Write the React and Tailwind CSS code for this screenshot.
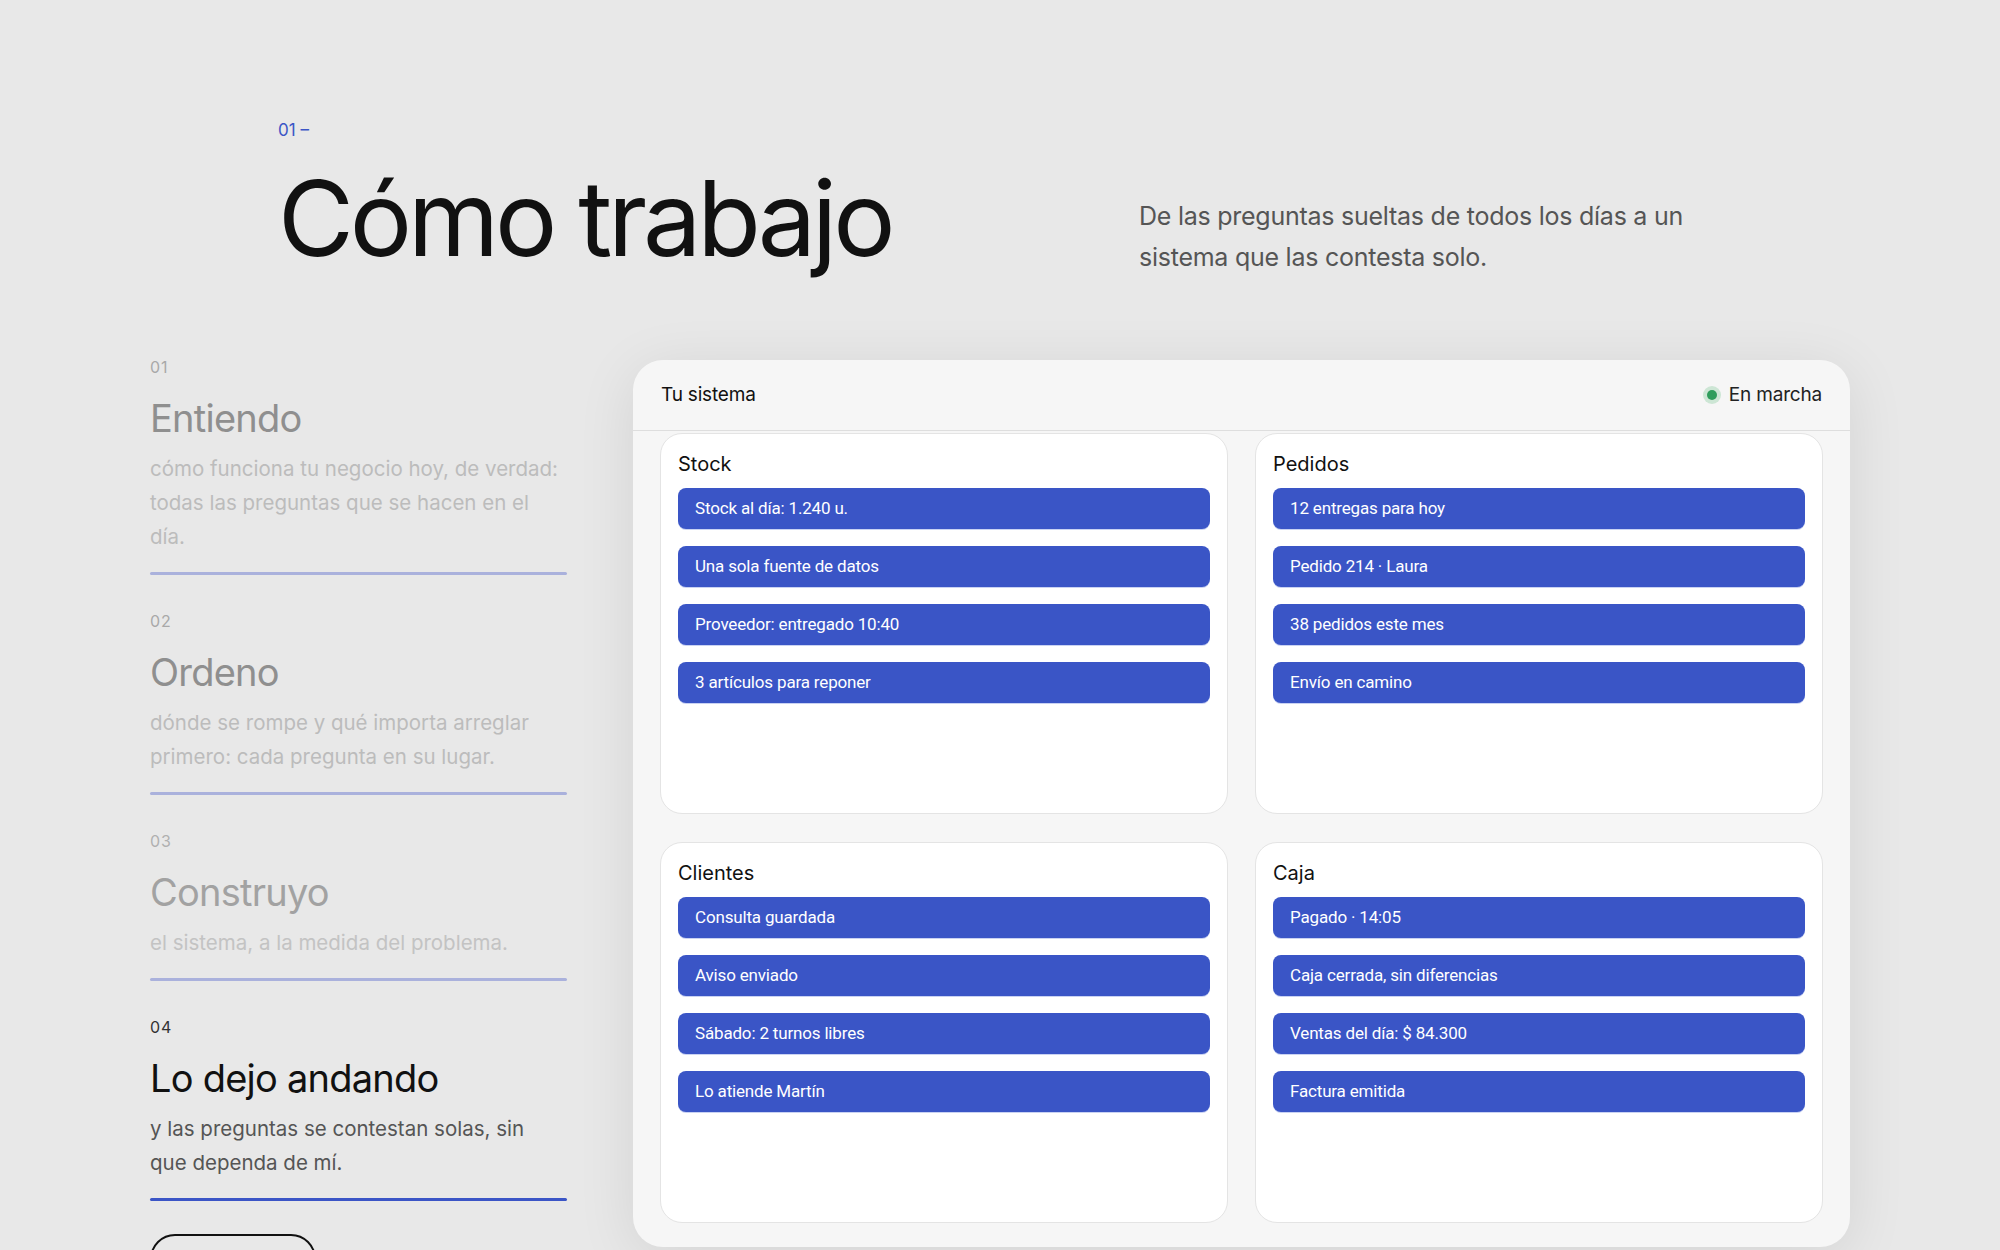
import React from 'react';

const steps = [
  {
    n: '01',
    title: 'Entiendo',
    desc: 'cómo funciona tu negocio hoy, de verdad: todas las preguntas que se hacen en el día.',
    num: 'text-[#a9a9a9]',
    head: 'text-[#8f8f8f]',
    body: 'text-[#bcbcbc]',
    line: 'bg-[#aab1dc]',
  },
  {
    n: '02',
    title: 'Ordeno',
    desc: 'dónde se rompe y qué importa arreglar primero: cada pregunta en su lugar.',
    num: 'text-[#a9a9a9]',
    head: 'text-[#8f8f8f]',
    body: 'text-[#bcbcbc]',
    line: 'bg-[#aab1dc]',
  },
  {
    n: '03',
    title: 'Construyo',
    desc: 'el sistema, a la medida del problema.',
    num: 'text-[#b0b0b0]',
    head: 'text-[#a2a2a2]',
    body: 'text-[#c3c3c3]',
    line: 'bg-[#aab1dc]',
  },
  {
    n: '04',
    title: 'Lo dejo andando',
    desc: 'y las preguntas se contestan solas, sin que dependa de mí.',
    num: 'text-[#333333]',
    head: 'text-[#111111]',
    body: 'text-[#555555]',
    line: 'bg-[#3b55c6]',
  },
];

const modules = [
  { name: 'Stock', items: ['Stock al día: 1.240 u.', 'Una sola fuente de datos', 'Proveedor: entregado 10:40', '3 artículos para reponer'] },
  { name: 'Pedidos', items: ['12 entregas para hoy', 'Pedido 214 · Laura', '38 pedidos este mes', 'Envío en camino'] },
  { name: 'Clientes', items: ['Consulta guardada', 'Aviso enviado', 'Sábado: 2 turnos libres', 'Lo atiende Martín'] },
  { name: 'Caja', items: ['Pagado · 14:05', 'Caja cerrada, sin diferencias', 'Ventas del día: $ 84.300', 'Factura emitida'] },
];

function ModuleCard({ mod }) {
  return (
    <div className="h-[381px] rounded-[22px] border border-[#e4e4e4] bg-white px-[17px] pt-[16px]">
      <div className="text-[20px] leading-[28px] text-[#111] mb-[10px]">{mod.name}</div>
      <div className="flex flex-col gap-[17px]">
        {mod.items.map((it) => (
          <div
            key={it}
            className="h-[41px] rounded-[8px] bg-[#3a55c6] pl-[17px] flex items-center text-white text-[17px] tracking-[-0.01em] font-['Roboto',sans-serif] shadow-[0_1px_0_#c9d2f2]"
          >
            {it}
          </div>
        ))}
      </div>
    </div>
  );
}

export default function App() {
  return (
    <div className="h-[1250px] overflow-hidden bg-[#e8e8e8] font-['Inter',sans-serif]">
      {/* Section header */}
      <div className="flex h-[360px] pt-[118px]">
        <div className="pl-[278px] w-[1139px]">
          <div className="text-[17px] leading-[24px] text-[#3b55c6]">01 –</div>
          <h1 className="mt-[20px] text-[104px] leading-[112px] tracking-[-0.04em] text-[#111]">Cómo trabajo</h1>
        </div>
        <p className="mt-[78px] w-[580px] text-[25px] leading-[41px] tracking-[-0.01em] text-[#555]">
          De las preguntas sueltas de todos los días a un sistema que las contesta solo.
        </p>
      </div>

      <div className="flex pl-[150px]">
        {/* Steps column */}
        <div className="w-[417px] -mt-[5px]">
          {steps.map((s, i) => (
            <div key={s.n} className={i === 0 ? '' : 'mt-[34px]'}>
              <div className={`text-[16px] leading-[24px] tracking-[0.06em] ${s.num}`}>{s.n}</div>
              <div className={`mt-[16px] text-[38px] leading-[46px] tracking-[-0.02em] ${s.head}`}>{s.title}</div>
              <p className={`mt-[11px] max-w-[412px] text-[20.5px] leading-[34px] ${s.body}`}>{s.desc}</p>
              <div className={`mt-[18px] h-[3px] rounded-full ${s.line}`} />
            </div>
          ))}
          <div className="mt-[33px] w-[166px] h-[50px] rounded-full border-2 border-[#111]" />
        </div>

        {/* System panel */}
        <div className="ml-[66px] w-[1217px] h-[887px] rounded-[30px] bg-[#f6f6f6] shadow-[0_10px_60px_rgba(0,0,0,0.09)]">
          <div className="h-[71px] border-b border-[#dedede] px-[28px] flex items-center justify-between">
            <span className="text-[19px] text-[#111] tracking-[-0.01em]">Tu sistema</span>
            <span className="flex items-center gap-[8px] text-[19px] text-[#222] tracking-[-0.01em]">
              <span className="w-[18px] h-[18px] rounded-full bg-[#cde6d5] flex items-center justify-center">
                <span className="w-[10px] h-[10px] rounded-full bg-[#2f9d5c]" />
              </span>
              En marcha
            </span>
          </div>
          <div className="grid grid-cols-2 gap-x-[27px] gap-y-[28px] px-[27px] pt-[2px]">
            {modules.map((m) => (
              <ModuleCard key={m.name} mod={m} />
            ))}
          </div>
        </div>
      </div>
    </div>
  );
}
